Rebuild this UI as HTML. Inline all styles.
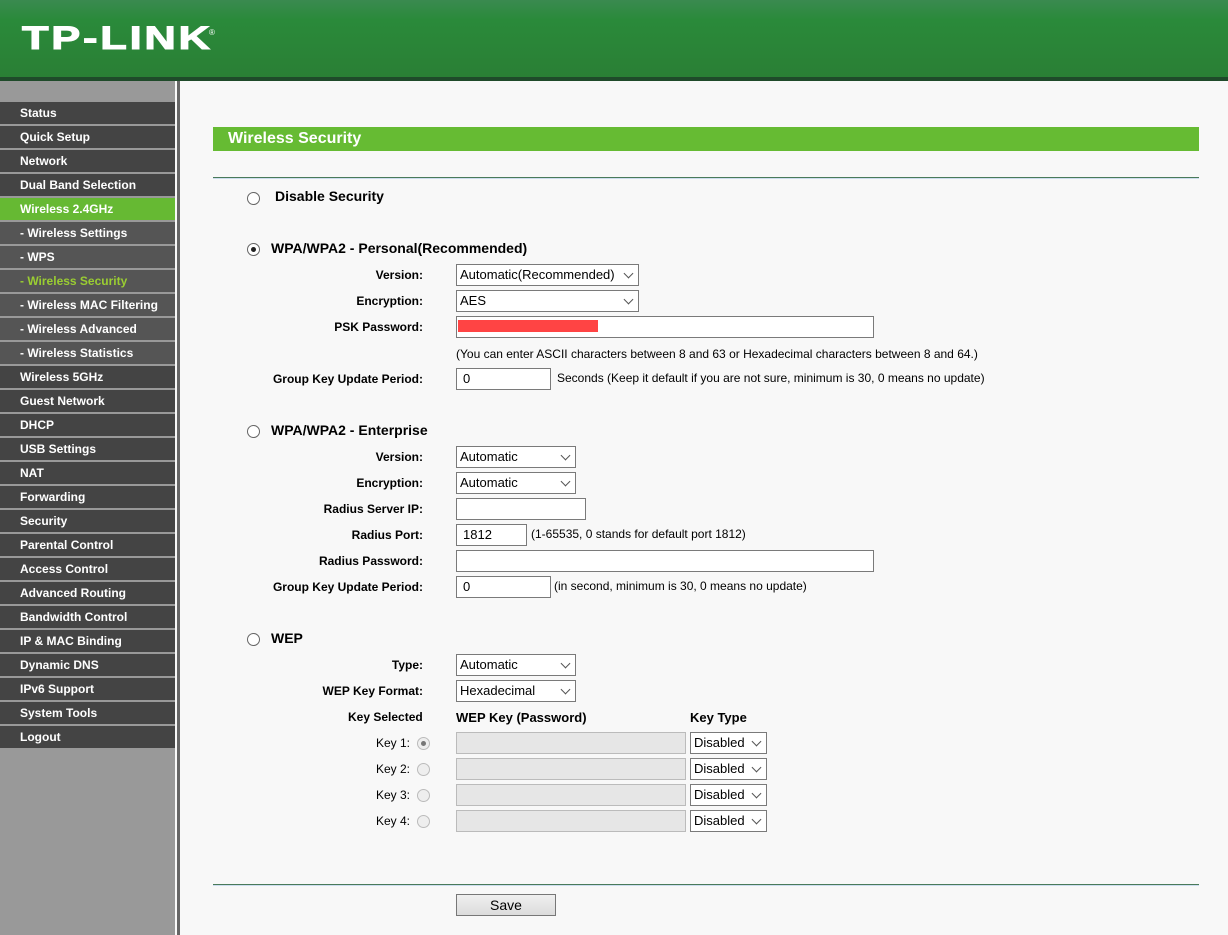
<!DOCTYPE html>
<html><head><meta charset="utf-8"><style>
*{margin:0;padding:0;box-sizing:border-box}
body{width:1228px;height:935px;overflow:hidden;background:#f8f8f8;font-family:"Liberation Sans",Arial,sans-serif;font-size:12px;color:#000;position:relative}
#hd{position:absolute;left:0;top:0;width:1228px;height:77px;background:linear-gradient(#3a8a50 0,#2a8a3a 20px,#2a7f35 77px)}
#hd .logo{position:absolute;left:22px;top:22px;color:#fff;font-weight:bold;font-size:32px;line-height:32px;letter-spacing:2px;-webkit-text-stroke:1px #fff;transform:scaleX(1.36);transform-origin:left top;white-space:nowrap}
#hd .r{position:absolute;left:209px;top:28px;color:#fff;font-size:8px}
#line{position:absolute;left:0;top:77px;width:1228px;height:4px;background:#1f4a2a}
#sb{position:absolute;left:0;top:81px;width:175px;height:854px;background:#999}
#sbb{position:absolute;left:175px;top:81px;width:5px;height:854px;background:#f8f8f8}
#sbb:after{content:"";position:absolute;left:2px;top:0;width:3px;height:854px;background:#666}
.mi{position:absolute;left:0;width:175px;height:22px;background:#444;color:#fff;font-weight:bold;font-size:12px;line-height:22px;padding-left:20px}
.mi.s{background:#555}
.mi.a{background:#66b933}
.mi.g{color:#9acd32}
.lbl{position:absolute;font-weight:bold;text-align:right;width:200px}
.t{position:absolute}
.b{font-weight:bold}
.sel{position:absolute;height:22px;border:1px solid #7a7a7a;background:#fff;font-size:13px;line-height:20px;padding-left:3px}
.sel:after{content:"";position:absolute;right:6px;top:5px;width:6px;height:6px;border-right:1px solid #555;border-bottom:1px solid #555;transform:rotate(45deg)}
.inp{position:absolute;height:22px;border:1px solid #7a7a7a;background:#fff;font-size:13px;line-height:20px;padding-left:6px}
.dis{background:#e6e6e6;border-color:#bbb}
.rad{position:absolute;width:13px;height:13px;border:1px solid #666;border-radius:50%;background:#fff}
.rad.on:after{content:"";position:absolute;left:3px;top:3px;width:5px;height:5px;border-radius:50%;background:#222}
.rad.gr{border-color:#bbb;background:#eee}
.rad.gr.on:after{background:#777}
.hr{position:absolute;left:213px;width:986px;height:2px;background:#4a7a5a;border-bottom:1px solid #cde}
</style></head><body>
<div id="hd"><div class="logo">TP-LINK</div><div class="r">®</div></div>
<div id="line"></div>
<div id="sb"></div><div id="sbb"></div>
<div class="mi" style="top:102px">Status</div>
<div class="mi" style="top:126px">Quick Setup</div>
<div class="mi" style="top:150px">Network</div>
<div class="mi" style="top:174px">Dual Band Selection</div>
<div class="mi a" style="top:198px">Wireless 2.4GHz</div>
<div class="mi s" style="top:222px">- Wireless Settings</div>
<div class="mi s" style="top:246px">- WPS</div>
<div class="mi s g" style="top:270px">- Wireless Security</div>
<div class="mi s" style="top:294px">- Wireless MAC Filtering</div>
<div class="mi s" style="top:318px">- Wireless Advanced</div>
<div class="mi s" style="top:342px">- Wireless Statistics</div>
<div class="mi" style="top:366px">Wireless 5GHz</div>
<div class="mi" style="top:390px">Guest Network</div>
<div class="mi" style="top:414px">DHCP</div>
<div class="mi" style="top:438px">USB Settings</div>
<div class="mi" style="top:462px">NAT</div>
<div class="mi" style="top:486px">Forwarding</div>
<div class="mi" style="top:510px">Security</div>
<div class="mi" style="top:534px">Parental Control</div>
<div class="mi" style="top:558px">Access Control</div>
<div class="mi" style="top:582px">Advanced Routing</div>
<div class="mi" style="top:606px">Bandwidth Control</div>
<div class="mi" style="top:630px">IP &amp; MAC Binding</div>
<div class="mi" style="top:654px">Dynamic DNS</div>
<div class="mi" style="top:678px">IPv6 Support</div>
<div class="mi" style="top:702px">System Tools</div>
<div class="mi" style="top:726px">Logout</div>

<div style="position:absolute;left:213px;top:127px;width:986px;height:24px;background:#66bb33;color:#fff;font-weight:bold;font-size:16px;line-height:24px;padding-left:15px">Wireless Security</div>
<div class="hr" style="top:177px"></div>

<div class="rad" style="left:247px;top:192px"></div>
<div class="t b" style="left:275px;top:188px;font-size:14px">Disable Security</div>

<div class="rad on" style="left:247px;top:243px"></div>
<div class="t b" style="left:271px;top:240px;font-size:14px">WPA/WPA2 - Personal(Recommended)</div>
<div class="lbl" style="left:223px;top:268px">Version:</div>
<div class="sel" style="left:456px;top:264px;width:183px">Automatic(Recommended)</div>
<div class="lbl" style="left:223px;top:294px">Encryption:</div>
<div class="sel" style="left:456px;top:290px;width:183px">AES</div>
<div class="lbl" style="left:223px;top:320px">PSK Password:</div>
<div class="inp" style="left:456px;top:316px;width:418px"><div style="position:absolute;left:1px;top:3px;width:140px;height:12px;background:#ff4444"></div></div>
<div class="t" style="left:456px;top:347px">(You can enter ASCII characters between 8 and 63 or Hexadecimal characters between 8 and 64.)</div>
<div class="lbl" style="left:223px;top:372px">Group Key Update Period:</div>
<div class="inp" style="left:456px;top:368px;width:95px">0</div>
<div class="t" style="left:557px;top:371px">Seconds (Keep it default if you are not sure, minimum is 30, 0 means no update)</div>

<div class="rad" style="left:247px;top:425px"></div>
<div class="t b" style="left:271px;top:422px;font-size:14px">WPA/WPA2 - Enterprise</div>
<div class="lbl" style="left:223px;top:450px">Version:</div>
<div class="sel" style="left:456px;top:446px;width:120px">Automatic</div>
<div class="lbl" style="left:223px;top:476px">Encryption:</div>
<div class="sel" style="left:456px;top:472px;width:120px">Automatic</div>
<div class="lbl" style="left:223px;top:502px">Radius Server IP:</div>
<div class="inp" style="left:456px;top:498px;width:130px"></div>
<div class="lbl" style="left:223px;top:528px">Radius Port:</div>
<div class="inp" style="left:456px;top:524px;width:71px">1812</div>
<div class="t" style="left:531px;top:527px">(1-65535, 0 stands for default port 1812)</div>
<div class="lbl" style="left:223px;top:554px">Radius Password:</div>
<div class="inp" style="left:456px;top:550px;width:418px"></div>
<div class="lbl" style="left:223px;top:580px">Group Key Update Period:</div>
<div class="inp" style="left:456px;top:576px;width:95px">0</div>
<div class="t" style="left:554px;top:579px">(in second, minimum is 30, 0 means no update)</div>

<div class="rad" style="left:247px;top:633px"></div>
<div class="t b" style="left:271px;top:630px;font-size:14px">WEP</div>
<div class="lbl" style="left:223px;top:658px">Type:</div>
<div class="sel" style="left:456px;top:654px;width:120px">Automatic</div>
<div class="lbl" style="left:223px;top:684px">WEP Key Format:</div>
<div class="sel" style="left:456px;top:680px;width:120px">Hexadecimal</div>
<div class="t b" style="left:348px;top:710px">Key Selected</div>
<div class="t b" style="left:456px;top:710px;font-size:13px">WEP Key (Password)</div>
<div class="t b" style="left:690px;top:710px;font-size:13px">Key Type</div>

<div class="t" style="left:376px;top:736px">Key 1:</div><div class="rad gr on" style="left:417px;top:737px"></div>
<div class="inp dis" style="left:456px;top:732px;width:230px"></div><div class="sel" style="left:690px;top:732px;width:77px">Disabled</div>
<div class="t" style="left:376px;top:762px">Key 2:</div><div class="rad gr" style="left:417px;top:763px"></div>
<div class="inp dis" style="left:456px;top:758px;width:230px"></div><div class="sel" style="left:690px;top:758px;width:77px">Disabled</div>
<div class="t" style="left:376px;top:788px">Key 3:</div><div class="rad gr" style="left:417px;top:789px"></div>
<div class="inp dis" style="left:456px;top:784px;width:230px"></div><div class="sel" style="left:690px;top:784px;width:77px">Disabled</div>
<div class="t" style="left:376px;top:814px">Key 4:</div><div class="rad gr" style="left:417px;top:815px"></div>
<div class="inp dis" style="left:456px;top:810px;width:230px"></div><div class="sel" style="left:690px;top:810px;width:77px">Disabled</div>

<div class="hr" style="top:884px"></div>
<div style="position:absolute;left:456px;top:894px;width:100px;height:22px;border:1px solid #777;background:linear-gradient(#f0f0f0,#dcdcdc);text-align:center;line-height:20px;font-size:14px">Save</div>
</body></html>
